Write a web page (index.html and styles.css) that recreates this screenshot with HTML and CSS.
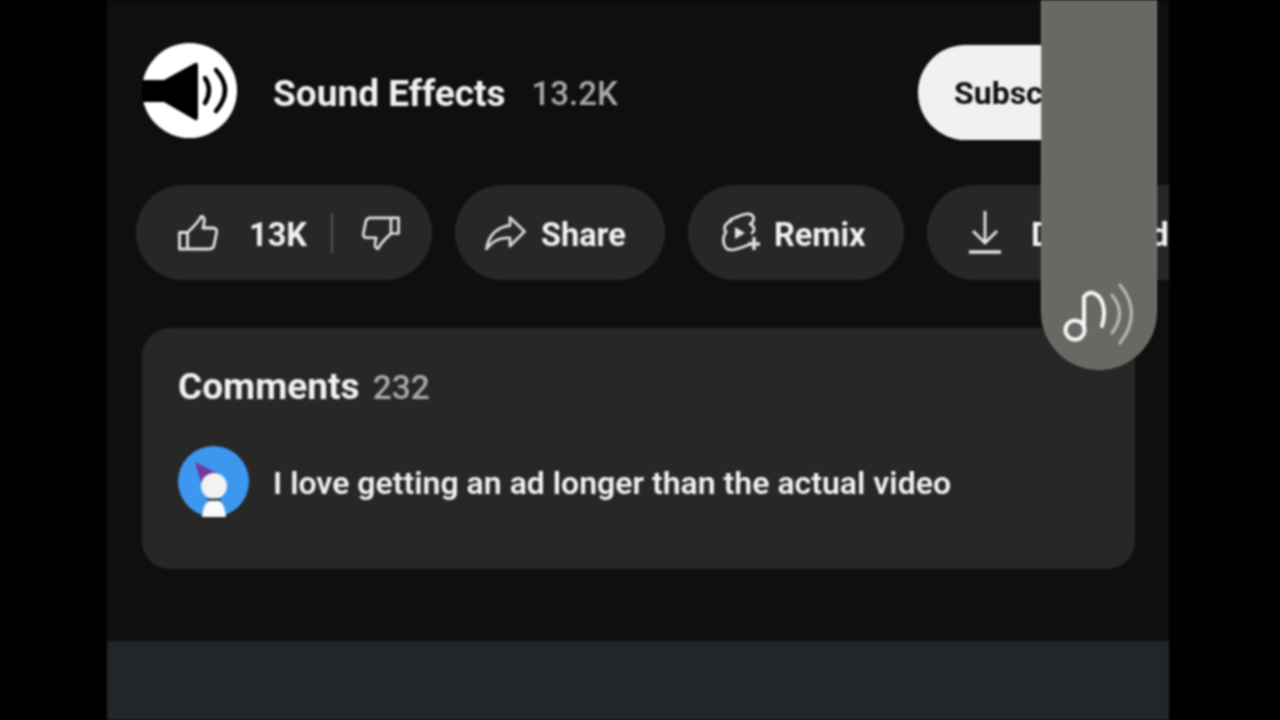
FILE: index.html
```html
<!DOCTYPE html>
<html lang="en">
<head>
<meta charset="utf-8">
<title>Sound Effects</title>
<link rel="stylesheet" href="styles.css">
</head>
<body>
<main class="screen">
  <section class="content">
    <header class="channel">
      <svg class="channel-logo" viewBox="0 0 95 95" aria-hidden="true">
        <circle cx="47.5" cy="47.5" r="47.5" fill="#fff"/>
        <path d="M0 37H22L53 20Q56 19 56 23V74Q56 78 53 77L22 59H0Z" fill="#000"/>
        <path d="M63 35Q71 47 63 60M74 27Q92 47 74 68" fill="none" stroke="#000" stroke-width="4.5" stroke-linecap="round"/>
        <path d="M87 16L92 20M86 78L91 75" stroke="#0f0f0f" stroke-width="3"/>
      </svg>
      <span class="channel-name">Sound Effects</span>
      <span class="channel-count">13.2K</span>
      <button class="subscribe">Subscribe</button>
    </header>

    <div class="actions">
      <div class="pill pill-like">
        <svg class="icon icon-like" viewBox="0 0 40 36" aria-hidden="true">
          <path d="M1.5 17.5H9.5V34H1.5ZM9.5 17.5C14 13 20 8 23 1.5C27 1.5 27 6 25 13H35C38 13 39 15 38.500 18L36 30C35.500 33 34 34 31 34H9.500" fill="none" stroke="#e4e4e4" stroke-width="2.800" stroke-linejoin="round"/>
        </svg>
        <span class="count">13K</span>
        <span class="divider"></span>
        <svg class="icon icon-dislike" viewBox="0 0 40 36" aria-hidden="true">
          <path d="M38.500 18.500H30.500V2H38.500ZM30.500 18.500C26 23 20 28 17 34.500C13 34.500 13 30 15 23H5C2 23 1 21 1.500 18L4 6C4.500 3 6 2 9 2H30.500" fill="none" stroke="#e4e4e4" stroke-width="2.800" stroke-linejoin="round"/>
        </svg>
      </div>
      <div class="pill pill-share">
        <svg class="icon icon-share" viewBox="0 0 41 34" aria-hidden="true">
          <path d="M25 1.500L39.500 15.500L25 30V22C15 21 7 25 1.500 33C3 21 11 11 25 9.500Z" fill="none" stroke="#d8d8d8" stroke-width="2.800" stroke-linejoin="round"/>
        </svg>
        <span class="label">Share</span>
      </div>
      <div class="pill pill-remix">
        <svg class="icon icon-remix" viewBox="0 0 38 41" aria-hidden="true">
          <path d="M8 8C13 6 22 1 27 2C33 3 33 10 28 12C33 14 33 19 30 21M9 9C3 11 1 16 4 20C1 24 0 31 4 36C8 40 16 37 26 33" fill="none" stroke="#e2e2e2" stroke-width="2.800" stroke-linecap="round" stroke-linejoin="round"/>
          <path d="M13 15L23 21L13 27Z" fill="#e2e2e2"/>
          <path d="M32 25V38M26 32H38" stroke="#e2e2e2" stroke-width="3.500"/>
        </svg>
        <span class="label">Remix</span>
      </div>
      <div class="pill pill-download">
        <svg class="icon icon-download" viewBox="0 0 32 43" aria-hidden="true">
          <path d="M16 0V32M4 20L16 32L28 20" fill="none" stroke="#e4e4e4" stroke-width="2.800"/>
          <path d="M0 41H32" stroke="#e4e4e4" stroke-width="3.500"/>
        </svg>
        <span class="label label-download">Download</span>
      </div>
    </div>

    <article class="comments">
      <h2 class="comments-title">Comments <span class="comments-count">232</span></h2>
      <div class="comment">
        <svg class="comment-avatar" viewBox="0 0 71 71" aria-hidden="true">
          <circle cx="35.500" cy="35.500" r="35.500" fill="#3e97ee"/>
          <path d="M17 16L41 28C34 29 27 32 24 40Z" fill="#74369c"/>
          <circle cx="36" cy="40" r="13" fill="#f0f2f4"/>
          <path d="M24 71C25 62 27 57 31 55H41C45 57 47 62 48 71Z" fill="#f8fafc"/>
          <path d="M29 53.500H43" stroke="#333" stroke-width="2"/>
        </svg>
        <p class="comment-text">I love getting an ad longer than the actual video</p>
      </div>
    </article>
  </section>
  <div class="panel"></div>

  <aside class="overlay">
    <svg class="overlay-icon" viewBox="0 0 80 68" aria-hidden="true">
      <circle cx="15" cy="50" r="9.500" fill="none" stroke="#f6f6f6" stroke-width="4"/>
      <path d="M24 48V17Q28 12 33 13C40 15 48 26 42 46" fill="none" stroke="#f6f6f6" stroke-width="4" stroke-linecap="round"/>
      <path d="M52 15Q67 33 52 53" fill="none" stroke="#b4b4b0" stroke-width="3.400" stroke-linecap="round"/>
      <path d="M60 5Q83 33 60 63" fill="none" stroke="#b4b4b0" stroke-width="3.400" stroke-linecap="round"/>
    </svg>
  </aside>
</main>
</body>
</html>
```
FILE: styles.css
```css
* { box-sizing: border-box; }
html, body { margin: 0; height: 100%; background: #000; overflow: hidden; }
body { font-family: Roboto, "Liberation Sans", sans-serif; }

.screen {
  position: relative;
  width: 1062px;
  height: 720px;
  margin-left: 107px;
  display: flex;
  flex-direction: column;
  background: #0f0f0f;
  overflow: hidden;
  filter: blur(0.8px);
}

.content { flex: 1; min-height: 0; padding-top: 43px; }
.panel { height: 79px; background: #222628; }

.channel { display: flex; align-items: center; height: 95px; padding-left: 35px; }
.channel-logo { width: 95px; height: 95px; flex: none; }
.channel-name { margin: 6px 0 0 36px; font-size: 37px; font-weight: 700; color: #f1f1f1; }
.channel-count { margin: 6px 0 0 26px; font-size: 33px; font-weight: 500; color: #aaa; }
.subscribe {
  margin-left: auto;
  margin-right: 24px;
  width: 227px;
  height: 95px;
  margin-top: 3px;
  padding: 2px 0 0 36px;
  border: 0;
  border-radius: 48px;
  background: #f1f1f1;
  color: #0f0f0f;
  font: 700 32px Roboto, sans-serif;
  text-align: left;
}

.actions {
  display: flex;
  gap: 23px;
  margin-top: 47px;
  padding-left: 29px;
}
.pill {
  display: flex;
  align-items: center;
  flex: none;
  height: 95px;
  border-radius: 48px;
  background: #272727;
  color: #f1f1f1;
}
.count, .label { margin-top: 4px; font-size: 32.5px; font-weight: 700; }
.label-download { letter-spacing: -0.900px; }
.icon { flex: none; display: block; }

.pill-like { width: 296px; padding-left: 42px; }
.icon-like { width: 40px; height: 36px; margin-right: 31px; }
.divider { width: 2px; height: 40px; margin: 0 29px 0 24px; background: #555; }
.icon-dislike { width: 38px; height: 36px; }

.pill-share { width: 210px; padding-left: 30px; }
.icon-share { width: 41px; height: 34px; margin-right: 15px; }

.pill-remix { width: 216px; padding-left: 34px; }
.icon-remix { width: 38px; height: 41px; margin-right: 14px; }

.pill-download { width: 300px; padding-left: 42px; }
.icon-download { width: 32px; height: 43px; margin-right: 30px; }

.comments {
  width: 993px;
  height: 241px;
  margin: 48px 0 0 35px;
  padding: 36px;
  border-radius: 28px;
  background: #272727;
}
.comments-title { margin: 0; font-size: 37px; line-height: 46px; font-weight: 700; color: #f1f1f1; }
.comments-count { margin-left: 4px; font-size: 33.500px; font-weight: 500; color: #aaa; }
.comment { display: flex; align-items: center; margin-top: 35px; }
.comment-avatar { width: 71px; height: 71px; flex: none; }
.comment-text { margin: 2px 0 0 24px; font-size: 32px; font-weight: 600; color: #f1f1f1; }

.overlay {
  position: absolute;
  top: -60px;
  left: 934px;
  width: 116px;
  height: 430px;
  border: 1.500px solid #7c7c78;
  border-radius: 0 0 58px 58px;
  background: #6a6864;
}
.overlay-icon { position: absolute; left: 18px; bottom: 21px; width: 80px; height: 68px; }
```
